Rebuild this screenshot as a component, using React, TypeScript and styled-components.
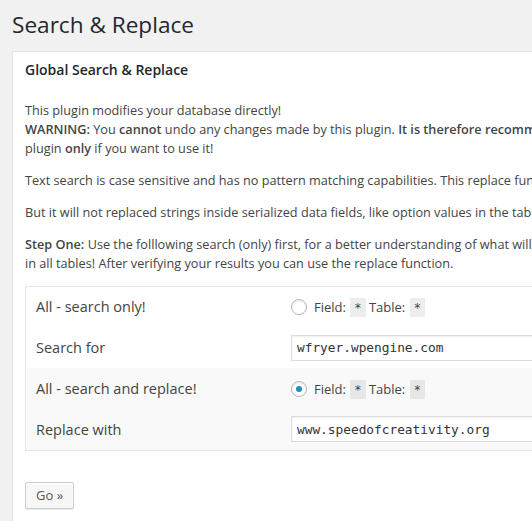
import React from "react";
import styled, { createGlobalStyle } from "styled-components";

const Global = createGlobalStyle`
  html, body {
    margin: 0;
    padding: 0;
    background: #f1f1f1;
    overflow: hidden;
  }
  body {
    font-family: "Open Sans", "Noto Sans", sans-serif;
    font-size: 13px;
    color: #444;
  }
`;

const Page = styled.div`
  width: 532px;
  height: 521px;
  overflow: hidden;
  padding: 10px 0 0 12px;
  box-sizing: border-box;
`;

const Title = styled.h1`
  margin: 0 0 12px;
  font-size: 22.6px;
  font-weight: 400;
  line-height: 29px;
  color: #23282d;
  white-space: nowrap;
`;

const Panel = styled.div`
  width: 900px;
  background: #fff;
  border: 1px solid #e5e5e5;
  box-shadow: 0 1px 1px rgba(0, 0, 0, 0.04);
`;

const PanelHead = styled.h3`
  margin: 0;
  padding: 8px 12px;
  font-size: 14px;
  line-height: 1.4;
  font-weight: 600;
  color: #23282d;
`;

const Inside = styled.div`
  padding: 0 12px 12px;
`;

const Para = styled.p`
  margin: 13px 0;
  font-size: 12.7px;
  line-height: 19px;
  white-space: nowrap;
  b {
    font-weight: 600;
  }
`;

const Table = styled.table`
  margin-top: 10px;
  width: 700px;
  border-collapse: collapse;
  border: 1px solid #e5e5e5;
`;

const Row = styled.tr<{ $alt?: boolean }>`
  height: 41px;
  background: ${(p) => (p.$alt ? "#f9f9f9" : "#fff")};
`;

const Label = styled.td`
  width: 235px;
  padding: 0 10px;
  font-size: 14.5px;
  color: #444;
  vertical-align: middle;
`;

const Cell = styled.td`
  padding: 0 10px;
  vertical-align: middle;
  font-size: 13px;
`;

const Choice = styled.label`
  display: flex;
  align-items: center;
  gap: 7px;
  color: #444;
`;

const Radio = styled.span<{ $checked?: boolean }>`
  width: 16px;
  height: 16px;
  box-sizing: border-box;
  border-radius: 50%;
  border: 1px solid #b4b9be;
  background: #fff;
  box-shadow: inset 0 1px 2px rgba(0, 0, 0, 0.1);
  display: flex;
  align-items: center;
  justify-content: center;
  flex: none;
  &::after {
    content: "";
    display: ${(p) => (p.$checked ? "block" : "none")};
    width: 6px;
    height: 6px;
    border-radius: 50%;
    background: #1e8cbe;
  }
`;

const Code = styled.code`
  font-family: "DejaVu Sans Mono", "Liberation Mono", monospace;
  font-size: 12px;
  background: rgba(0, 0, 0, 0.07);
  padding: 3px 4px 2px;
  margin-left: 1px;
`;

const TextInput = styled.input`
  width: 320px;
  height: 26px;
  box-sizing: border-box;
  margin: 0;
  padding: 3px 5px;
  border: 1px solid #ddd;
  box-shadow: inset 0 1px 2px rgba(0, 0, 0, 0.07);
  background: #fff;
  color: #333;
  font-family: "DejaVu Sans Mono", "Liberation Mono", monospace;
  font-size: 12.8px;
  outline: none;
`;

const Submit = styled.div`
  margin-top: 31px;
`;

const Button = styled.button`
  height: 27px;
  padding: 0 10px 1px;
  font-family: "Open Sans", "Noto Sans", sans-serif;
  font-size: 13px;
  line-height: 25px;
  color: #555;
  background: #f7f7f7;
  border: 1px solid #ccc;
  border-radius: 2px;
  box-shadow: inset 0 1px 0 #fff, 0 1px 0 rgba(0, 0, 0, 0.08);
  cursor: pointer;
`;

function Target() {
  return (
    <>
      Field: <Code>*</Code> Table: <Code>*</Code>
    </>
  );
}

export default function App() {
  return (
    <>
      <Global />
      <Page>
        <Title>Search &amp; Replace</Title>
        <Panel>
          <PanelHead>Global Search &amp; Replace</PanelHead>
          <Inside>
            <Para>
              This plugin modifies your database directly!
              <br />
              <b>WARNING:</b> You <b>cannot</b> undo any changes made by this plugin.{" "}
              <b>It is therefore recommended you backup your database before running this</b>
              <br />
              plugin <b>only</b> if you want to use it!
            </Para>
            <Para>
              Text search is case sensitive and has no pattern matching capabilities. This replace function matches raw text.
            </Para>
            <Para>
              But it will not replaced strings inside serialized data fields, like option values in the table.
            </Para>
            <Para>
              <b>Step One:</b> Use the folllowing search (only) first, for a better understanding of what will be replaced
              <br />
              in all tables! After verifying your results you can use the replace function.
            </Para>
            <Table>
              <tbody>
                <Row>
                  <Label>All - search only!</Label>
                  <Cell>
                    <Choice>
                      <Radio />
                      <span>
                        <Target />
                      </span>
                    </Choice>
                  </Cell>
                </Row>
                <Row>
                  <Label>Search for</Label>
                  <Cell>
                    <TextInput defaultValue="wfryer.wpengine.com" />
                  </Cell>
                </Row>
                <Row $alt>
                  <Label>All - search and replace!</Label>
                  <Cell>
                    <Choice>
                      <Radio $checked />
                      <span>
                        <Target />
                      </span>
                    </Choice>
                  </Cell>
                </Row>
                <Row $alt>
                  <Label>Replace with</Label>
                  <Cell>
                    <TextInput defaultValue="www.speedofcreativity.org" />
                  </Cell>
                </Row>
              </tbody>
            </Table>
            <Submit>
              <Button>Go »</Button>
            </Submit>
          </Inside>
        </Panel>
      </Page>
    </>
  );
}
